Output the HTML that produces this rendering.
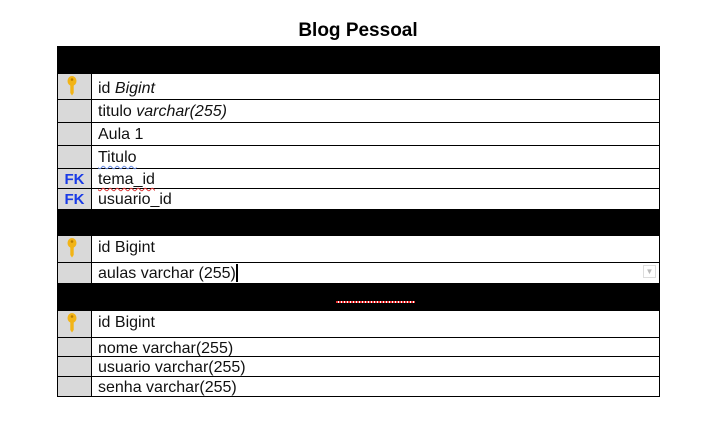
<!DOCTYPE html>
<html><head><style>
body{margin:0;width:723px;height:436px;background:#fff;font-family:"Liberation Sans",sans-serif;position:relative;overflow:hidden}
.t{position:absolute;left:0;width:716px;text-align:center;top:20px;font-size:19px;font-weight:bold;color:#000}
.g{position:absolute;left:58px;width:33px;background:#d9d9d9}
.b{position:absolute;left:57px;width:603px;background:#000}
.h{position:absolute;left:57px;width:603px;height:1px;background:#000}
.v{position:absolute;width:1px;background:#000}
.x{position:absolute;left:98px;font-size:16px;color:#111;white-space:nowrap}
.fk{position:absolute;left:58px;width:33px;text-align:center;color:#1a3be6;font-weight:bold;font-size:15px}
svg{position:absolute;left:66px}
</style></head><body>
<div class="t">Blog Pessoal</div>
<div class="b" style="top:46px;height:28px"></div>
<div class="g" style="top:74px;height:135px"></div>
<div class="b" style="top:209px;height:27px"></div>
<div class="g" style="top:236px;height:47px"></div>
<div class="b" style="top:283px;height:28px"><div style="position:absolute;left:279px;top:18px;width:79px;height:2px;background:repeating-linear-gradient(90deg,#e33 0 2px,#fff 2px 3px)"></div></div>
<div class="g" style="top:311px;height:86px"></div>
<div class="v" style="left:57px;top:46px;height:351px"></div>
<div class="v" style="left:659px;top:46px;height:351px"></div>
<div class="v" style="left:91px;top:74px;height:135px"></div>
<div class="v" style="left:91px;top:236px;height:47px"></div>
<div class="v" style="left:91px;top:311px;height:86px"></div>
<div class="h" style="top:99px"></div>
<div class="h" style="top:122px"></div>
<div class="h" style="top:145px"></div>
<div class="h" style="top:168px"></div>
<div class="h" style="top:188px"></div>
<div class="h" style="top:262px"></div>
<div class="h" style="top:337px"></div>
<div class="h" style="top:356px"></div>
<div class="h" style="top:376px"></div>
<div class="h" style="top:396px"></div>
<svg style="top:76px" width="12" height="20" viewBox="0 0 12 20"><ellipse cx="6" cy="5" rx="4.5" ry="5" fill="#f2b416"/><circle cx="6" cy="3.5" r="1.3" fill="#b87d00"/><path d="M4.3 8h3.4v9l-1.7 2.5-1.7-2.5z" fill="#f2b416"/></svg>
<svg style="top:238px" width="12" height="20" viewBox="0 0 12 20"><ellipse cx="6" cy="5" rx="4.5" ry="5" fill="#f2b416"/><circle cx="6" cy="3.5" r="1.3" fill="#b87d00"/><path d="M4.3 8h3.4v9l-1.7 2.5-1.7-2.5z" fill="#f2b416"/></svg>
<svg style="top:313px" width="12" height="20" viewBox="0 0 12 20"><ellipse cx="6" cy="5" rx="4.5" ry="5" fill="#f2b416"/><circle cx="6" cy="3.5" r="1.3" fill="#b87d00"/><path d="M4.3 8h3.4v9l-1.7 2.5-1.7-2.5z" fill="#f2b416"/></svg>
<div class="x" style="top:80px">id <i>Bigint</i></div>
<div class="x" style="top:103px">titulo <i>varchar(255)</i></div>
<div class="x" style="top:126px">Aula 1</div>
<div class="x" style="top:149px;text-decoration:underline wavy #6a8ee6 1px;text-underline-offset:3px">Titulo</div>
<div class="fk" style="top:171px">FK</div>
<div class="x" style="top:171px;text-decoration:underline wavy #d33 1px;text-underline-offset:3px">tema_id</div>
<div class="fk" style="top:191px">FK</div>
<div class="x" style="top:191px">usuario_id</div>
<div class="x" style="top:239px">id Bigint</div>
<div class="x" style="top:265px">aulas varchar (255)</div>
<div style="position:absolute;left:236px;top:264px;width:2px;height:18px;background:#000"></div>
<div style="position:absolute;left:643px;top:265px;width:11px;height:11px;border:1px solid #ddd;color:#bbb;font-size:8px;text-align:center;line-height:11px">▼</div>
<div class="x" style="top:314px">id Bigint</div>
<div class="x" style="top:340px">nome varchar(255)</div>
<div class="x" style="top:359px">usuario varchar(255)</div>
<div class="x" style="top:379px">senha varchar(255)</div>
</body></html>
